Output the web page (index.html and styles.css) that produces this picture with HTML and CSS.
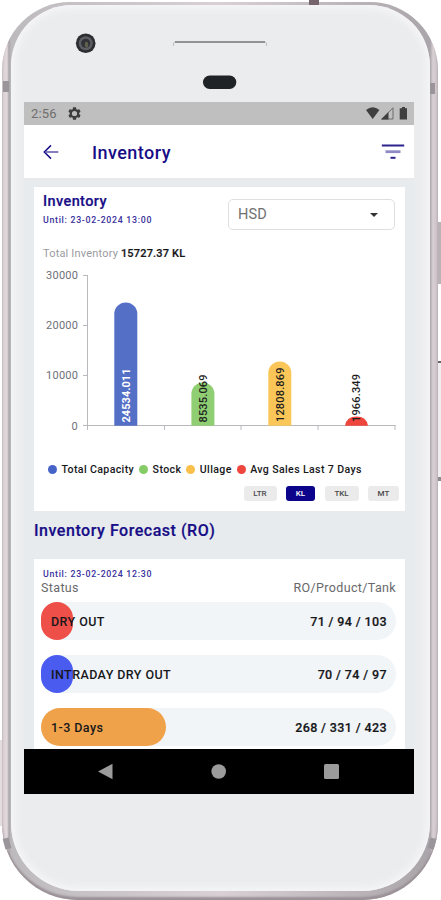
FILE: index.html
```html
<!DOCTYPE html>
<html lang="en">
<head>
  <meta charset="UTF-8" />
  <meta name="viewport" content="width=device-width, initial-scale=1.0"/>
  <title>Inventory</title>
  <link rel="stylesheet" href="styles.css">
</head>
<body>

  <div class="phone">
    <div class="phone-face">
      <svg class="phone-top" viewBox="11 5 419 97">
        <circle cx="85.7" cy="43.3" r="9.8" fill="#2b2d30"/>
        <circle cx="85.7" cy="43.3" r="7" fill="#5b5f64"/>
        <circle cx="85.7" cy="43.3" r="4.6" fill="#303238"/>
        <ellipse cx="86.5" cy="44.8" rx="1.8" ry="3" fill="#5d5f4c"/>
        <path d="M173.5 46v-2q0-2 2-2h89q2 0 2 2v2" fill="none" stroke="#c3c5c8" stroke-width="1.2"/>
        <path d="M175 42h90" stroke="#919396" stroke-width="1.8"/>
        <rect x="203" y="75.5" width="33.3" height="13.5" rx="6.7" fill="#202326"/>
      </svg>

      <div class="screen">
        <div class="status-bar">
          <span class="time">2:56</span>
          <svg class="gear" width="13" height="13" viewBox="2 2 20 20" fill="#3d3d3d">
            <path fill-rule="evenodd" d="M19.14 12.94c.04-.3.06-.61.06-.94s-.02-.64-.07-.94l2.03-1.58a.49.49 0 0 0 .12-.61l-1.92-3.32a.49.49 0 0 0-.59-.22l-2.39.96c-.5-.38-1.03-.7-1.62-.94l-.36-2.54a.48.48 0 0 0-.48-.41h-3.84a.47.47 0 0 0-.47.41l-.36 2.54c-.59.24-1.13.57-1.62.94l-2.39-.96a.48.48 0 0 0-.59.22L2.74 8.87a.47.47 0 0 0 .12.61l2.03 1.58c-.05.3-.09.63-.09.94s.02.64.07.94l-2.03 1.58a.49.49 0 0 0-.12.61l1.92 3.32c.12.22.37.29.59.22l2.39-.96c.5.38 1.03.7 1.62.94l.36 2.54c.05.24.24.41.48.41h3.84c.24 0 .44-.17.47-.41l.36-2.54c.59-.24 1.13-.56 1.62-.94l2.39.96c.22.08.47 0 .59-.22l1.92-3.32a.47.47 0 0 0-.12-.61zM12 16a4 4 0 1 1 0-8 4 4 0 0 1 0 8z"/>
          </svg>
          <svg class="signals" width="42" height="13" viewBox="0 0 42 13">
            <path d="M0 3Q6.7-2.6 13.4 3L6.7 12z" fill="#3f3f3f"/>
            <path d="M27 .8V12H15.8z" fill="none" stroke="#6c6c6c" stroke-width="1"/>
            <path d="M22.5 5V12.5H15z" fill="#3f3f3f"/>
            <path d="M36 0h3v1.3h2V12.5H33.7V1.3H36z" fill="#3f3f3f"/>
          </svg>
        </div>

        <div class="app-bar">
          <svg class="back" width="16" height="16" viewBox="0 0 16 16" fill="none" stroke="#170d86">
            <path d="M8 1.4L1.3 8L8 14.6" stroke-width="1.5"/>
            <path d="M2 8H15.3" stroke-width="1.5" stroke="#5a53a8"/>
          </svg>
          <h1>Inventory</h1>
          <svg class="filter" width="24" height="16" viewBox="0 0 24 16">
            <path d="M.8 1.5H23.2" stroke="#2b228c" stroke-width="2"/>
            <path d="M4.5 7.7H19.5" stroke="#8e8bc2" stroke-width="2.8"/>
            <path d="M9.5 13.8H14.5" stroke="#2b228c" stroke-width="2"/>
          </svg>
        </div>

        <div class="content">
          <div class="card chart-card">
            <div class="card-head">
              <div>
                <h2>Inventory</h2>
                <p class="until">Until: 23-02-2024 13:00</p>
              </div>
              <div class="select">
                <span>HSD</span>
                <i class="caret"></i>
              </div>
            </div>
            <p class="total">Total Inventory <b>15727.37 KL</b></p>

            <svg class="chart" viewBox="34 265 371 180">
              <g fill="none" stroke="#b9b9bd" stroke-width="1">
                <path d="M87.5 275V430M83 275.5H88M83 325.5H88M83 375.5H88M83 425.5H395.5"/>
                <path d="M164.5 425V430M241 425V430M318 425V430M395 425V430"/>
              </g>
              <g class="axis-text">
                <text x="46" y="279" textLength="32">30000</text>
                <text x="46" y="329" textLength="32">20000</text>
                <text x="46" y="379" textLength="32">10000</text>
                <text x="71.5" y="429.5">0</text>
              </g>
              <path d="M114.3 425.7V314A11.5 11.5 0 0 1 137.3 314V425.7z" fill="#546fc6"/>
              <path d="M191.4 425.7V394A11.5 11.5 0 0 1 214.4 394V425.7z" fill="#8fce73"/>
              <path d="M268.3 425.7V373A11.5 11.5 0 0 1 291.3 373V425.7z" fill="#fac657"/>
              <path d="M345 425.7Q346.5 416.5 356.5 416.5T368 425.7z" fill="#ee453c"/>
              <g class="bar-text">
                <text class="light" transform="translate(130 422.5) rotate(-90)" textLength="54">24534.011</text>
                <text transform="translate(206.5 422.5) rotate(-90)" textLength="48">8535.069</text>
                <text transform="translate(283.5 422) rotate(-90)" textLength="54.5">12808.869</text>
                <text transform="translate(360.2 422) rotate(-90)" textLength="48">1966.349</text>
              </g>
            </svg>

            <div class="legend">
              <span class="blue">Total Capacity</span>
              <span class="green">Stock</span>
              <span class="yellow">Ullage</span>
              <span class="red">Avg Sales Last 7 Days</span>
            </div>
            <div class="units">
              <span class="ltr">LTR</span>
              <span class="kl active">KL</span>
              <span class="tkl">TKL</span>
              <span class="mt">MT</span>
            </div>
          </div>

          <h3>Inventory Forecast (RO)</h3>

          <div class="card forecast">
            <p class="until">Until: 23-02-2024 12:30</p>
            <div class="columns">
              <span>Status</span>
              <span>RO/Product/Tank</span>
            </div>
            <div class="row dry"><span>DRY OUT</span><b>71 / 94 / 103</b></div>
            <div class="row intraday"><span>INTRADAY DRY OUT</span><b>70 / 74 / 97</b></div>
            <div class="row days"><span>1-3 Days</span><b>268 / 331 / 423</b></div>
          </div>
        </div>

        <svg class="nav-bar" viewBox="0 0 390 45" fill="#9b9b9b">
          <path d="M74 22.5L88.5 14.8V30.3z"/>
          <circle cx="194.7" cy="22.5" r="7.3"/>
          <rect x="300" y="15" width="15" height="15" rx="1.5"/>
        </svg>
      </div>
    </div>
  </div>

  <i class="band top-right"></i>
  <i class="band left-upper"></i>
  <i class="band right-upper"></i>
  <i class="band left-lower"></i>
  <i class="band right-lower"></i>
  <i class="side-key power"></i>
  <i class="side-key volume"></i>
  <i class="side-key left-key"></i>

</body>
</html>
```
FILE: styles.css
```css
* {
  box-sizing: border-box;
}

body {
  margin: 0;
  padding: 2px 3px 0 2px;
  position: relative;
  height: 900px;
  overflow: hidden;
  background: #fff;
  font-family: Roboto, "Liberation Sans", sans-serif;
  color: #17171a;
}

h1, h2, h3, p {
  margin: 0;
}

svg {
  display: block;
}

/* phone body */
.phone {
  height: 898px;
  padding: 3px 8px 9px 9px;
  border-radius: 68px 68px 76px 76px;
  background: linear-gradient(to right, #d9cfd3 0, #e2d9dc 5px, #a9a5a9 7px, #bdbabd 9px, #d8d0d4 50%, #aaa5aa 428px, #d9d0d4 431px, #c9bfc4 436px);
  box-shadow: inset 0 -3px 2px #9b9298;
}

.phone-face {
  height: 886px;
  border-radius: 61px 61px 68px 68px;
  background: #ebecee;
  box-shadow: inset 0 0 7px 4px #f5f5f8;
}

.phone-top {
  width: 419px;
  height: 97px;
}

.screen {
  width: 390px;
  height: 692px;
  margin-left: 13px;
  display: flex;
  flex-direction: column;
  overflow: hidden;
}

.status-bar {
  height: 23px;
  flex: none;
  display: flex;
  align-items: center;
  padding: 0 6px 0 7px;
  background: #bfbfbf;
}

.time {
  font-size: 13px;
  letter-spacing: 0.2px;
  color: #6e6e6e;
  width: 37px;
}

.signals {
  margin-left: auto;
}

.app-bar {
  height: 53px;
  flex: none;
  display: flex;
  align-items: center;
  padding: 0 9px 0 19px;
  background: #fff;
}

h1 {
  margin-left: 33px;
  padding-top: 1px;
  font-size: 18px;
  font-weight: 500;
  letter-spacing: 0.45px;
  color: #170d86;
}

.filter {
  margin-left: auto;
}

.content {
  flex: 1;
  min-height: 0;
  overflow: hidden;
  padding: 9px 9px 0 10px;
  background: #e7ebed;
}

.card {
  background: #fff;
}

.chart-card {
  height: 324px;
}

.card-head {
  height: 57px;
  display: flex;
  justify-content: space-between;
  padding: 4px 10px 0 9px;
}

h2 {
  font-size: 14.5px;
  line-height: 21px;
  font-weight: 500;
  letter-spacing: 0.4px;
  color: #170d86;
  -webkit-text-stroke: 0.2px #170d86;
}

.until {
  font-size: 8.8px;
  line-height: 12px;
  font-weight: 500;
  letter-spacing: 0.7px;
  color: #3a319c;
}

.card-head .until {
  margin-top: 2px;
}

.select {
  width: 167px;
  height: 31px;
  margin-top: 8px;
  padding: 0 16px 0 9px;
  display: flex;
  align-items: center;
  justify-content: space-between;
  border: 1px solid #dfdfe1;
  border-radius: 5px;
  font-size: 14.5px;
  letter-spacing: 0.2px;
  color: #707070;
}

.caret {
  border: 4.5px solid transparent;
  border-top-color: #333;
  border-bottom: 0;
}

.total {
  height: 21px;
  padding-left: 9px;
  font-size: 11px;
  line-height: 19px;
  letter-spacing: 0.18px;
  color: #9b9b9f;
}

.total b {
  font-weight: 500;
  color: #17171a;
  -webkit-text-stroke: 0.2px #17171a;
}

.chart {
  width: 371px;
  height: 180px;
}

.axis-text {
  font-size: 11px;
  fill: #6f7078;
}

.bar-text {
  font-size: 11px;
  font-weight: 500;
  fill: #1d1d1d;
}

.bar-text .light {
  font-weight: 700;
  fill: #fff;
}

.legend {
  height: 18px;
  margin-top: 15px;
  padding-left: 14px;
  display: flex;
  align-items: center;
  gap: 5px;
  font-size: 10.6px;
  font-weight: 500;
  letter-spacing: 0.36px;
  white-space: nowrap;
}

.legend span {
  display: flex;
  align-items: center;
  gap: 4.5px;
}

.legend span::before {
  content: "";
  width: 9px;
  height: 9px;
  border-radius: 50%;
  background: #4664c8;
}

.legend .green::before {
  background: #85cb66;
}

.legend .yellow::before {
  background: #fac04a;
}

.legend .red::before {
  background: #ee453c;
}

.units {
  display: flex;
  justify-content: flex-end;
  margin: 8px 6px 0 0;
  gap: 9.5px;
  font-size: 8px;
  line-height: 15px;
  font-weight: 500;
  text-align: center;
  color: #4a4a4a;
}

.units span {
  width: 34px;
  border-radius: 3px;
  background: #ebebeb;
}

.units .ltr {
  width: 33px;
}

.units .kl {
  width: 29px;
}

.units .mt {
  width: 31px;
}

.units .active {
  background: #0c058b;
  color: #fff;
}

h3 {
  height: 48px;
  line-height: 39px;
  font-size: 16px;
  font-weight: 500;
  letter-spacing: 0.53px;
  color: #170d86;
  -webkit-text-stroke: 0.2px #170d86;
}

.forecast {
  height: 230px;
  padding: 9px 9px 0 7px;
}

.forecast .until {
  padding-left: 2px;
}

.columns {
  display: flex;
  justify-content: space-between;
  line-height: 16px;
  margin-bottom: 6px;
  font-size: 12.5px;
  letter-spacing: 0.36px;
  color: #68686b;
}

/* the filled pill of a row is as long as the share it shows */
.row {
  position: relative;
  height: 38px;
  margin-bottom: 15px;
  padding: 0 9px 0 10px;
  display: flex;
  align-items: center;
  justify-content: space-between;
  border-radius: 19px;
  background: #f1f5f8;
  font-size: 12.5px;
  font-weight: 500;
}

.row span {
  z-index: 1;
  letter-spacing: 0.43px;
}

.row b {
  font-weight: 500;
  letter-spacing: 0.38px;
  -webkit-text-stroke: 0.2px #17171a;
}

.row::before {
  content: "";
  position: absolute;
  left: 0;
  top: 0;
  width: 32px;
  height: 100%;
  border-radius: 19px;
  background: #ee4f49;
}

.intraday::before {
  background: #4a5bf0;
}

.days::before {
  width: 125px;
  background: #f0a24b;
}

.nav-bar {
  width: 390px;
  height: 45px;
  flex: none;
  background: #000;
}

/* antenna bands and hardware keys lie over the frame */
.band {
  position: absolute;
  width: 6px;
  height: 11px;
  background: #99959a;
}

.top-right {
  left: 309px;
  top: 0;
  width: 10px;
  height: 5px;
  background: #76656e;
}

.left-upper {
  left: 3px;
  top: 81px;
}

.right-upper {
  left: 430px;
  top: 83px;
  width: 5px;
}

.left-lower {
  left: 4px;
  top: 838px;
  transform: rotate(-15deg);
}

.right-lower {
  left: 429px;
  top: 838px;
  transform: rotate(15deg);
}

.side-key {
  position: absolute;
  width: 3px;
  background: #b9b3b7;
}

.power {
  left: 438px;
  top: 222px;
  height: 62px;
}

.volume {
  left: 438px;
  top: 361px;
  height: 120px;
  background: #f1eef0;
  border-top: 2px solid #66646a;
  border-bottom: 4px solid #8e8a90;
}

.left-key {
  left: 0;
  top: 740px;
  width: 2px;
  height: 86px;
  background: #e4dde0;
}
```
